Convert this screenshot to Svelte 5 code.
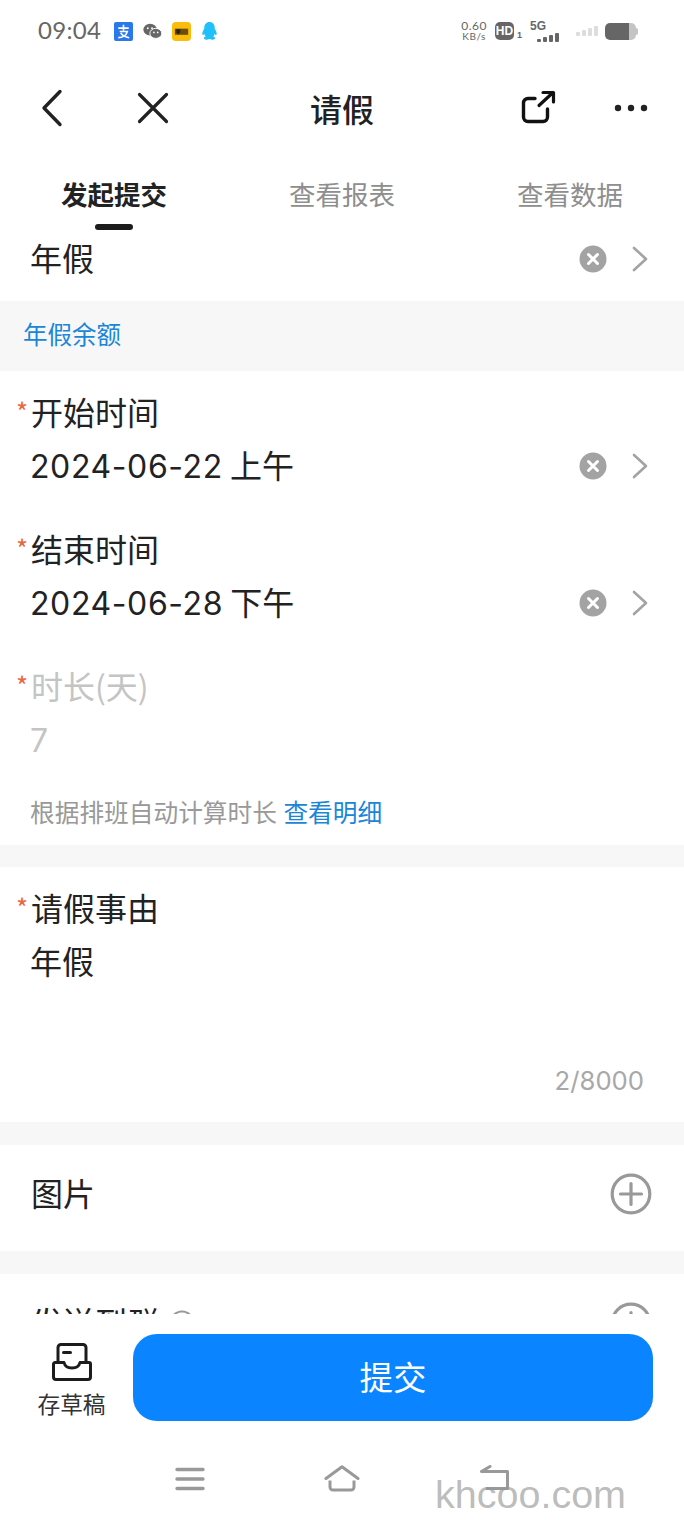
<script>
    const tabs = ['发起提交', '查看报表', '查看数据'];
    let active = 0;
</script>

{#snippet clearIcon()}
    <svg class="clear" width="28" height="28" viewBox="0 0 28 28">
        <circle cx="14" cy="14" r="13.5" fill="#a3a3a3" />
        <path d="M9.5 9.5l9 9M18.5 9.5l-9 9" fill="none" stroke="#fff" stroke-width="3" stroke-linecap="round" />
    </svg>
{/snippet}

{#snippet arrowIcon()}
    <svg class="arrow" width="16" height="26" viewBox="0 0 16 26">
        <path d="M2 2l12 11L2 24" fill="none" stroke="#a3a3a3" stroke-width="2.6" stroke-linecap="round" stroke-linejoin="round" />
    </svg>
{/snippet}

{#snippet plusIcon()}
    <svg width="42" height="42" viewBox="0 0 42 42">
        <circle cx="21" cy="21" r="18.8" fill="none" stroke="#999" stroke-width="3.2" />
        <path d="M21 10.5v21M10.5 21h21" fill="none" stroke="#999" stroke-width="3.2" stroke-linecap="round" />
    </svg>
{/snippet}

<div class="page">
    <div class="status">
        <span class="time">09:04</span>
        <div class="apps">
            <svg width="19" height="19" viewBox="0 0 20 20">
                <rect width="20" height="20" rx="2" fill="#2a78ea" />
                <path d="M4.5 6.5h11M10 3v6M6 10h8c-1 4-5 6.500-9.500 6.500M7 11.500c2 3 5.500 4.500 9 5" fill="none" stroke="#fff" stroke-width="1.700" />
            </svg>
            <svg width="19" height="17" viewBox="0 0 20 18">
                <ellipse cx="7.500" cy="7" rx="7.200" ry="6.200" fill="#666" />
                <ellipse cx="13.500" cy="11" rx="6.300" ry="5.300" fill="#666" stroke="#fff" stroke-width="1" />
                <circle cx="5" cy="5.500" r="1" fill="#fff" />
                <circle cx="9.500" cy="5.500" r="1" fill="#fff" />
                <circle cx="11.500" cy="10" r=".9" fill="#fff" />
                <circle cx="15.500" cy="10" r=".9" fill="#fff" />
            </svg>
            <svg width="19" height="19" viewBox="0 0 20 20">
                <rect width="20" height="20" rx="4" fill="#fbbd0c" />
                <rect x="3" y="7" width="14" height="6.500" fill="#6b4f0a" />
                <path d="M4 8.500h5M4 10.500h5M6.500 8v5" stroke="#111" stroke-width="1.100" />
            </svg>
            <svg width="17" height="19" viewBox="0 0 18 20">
                <path d="M9 0c3.500 0 5.500 2.700 5.500 6 0 1 .3 1.500 1 2.700 1 1.800 1.500 4.300.7 5-.5.400-1.200-.4-1.700-1.300-.2 1.200-.8 2.200-1.500 2.800 1 .4 2 1 2 2 0 1.300-2.500 1.800-4 1.300-.8-.3-1.300-.6-2-.6s-1.200.3-2 .6c-1.500.5-4 0-4-1.300 0-1 1-1.600 2-2-.7-.6-1.300-1.600-1.500-2.800-.5.900-1.200 1.700-1.700 1.300-.8-.7-.3-3.200.7-5 .7-1.200 1-1.700 1-2.700C3.500 2.700 5.500 0 9 0z" fill="#1fc0fb" />
            </svg>
        </div>
        <div class="indicators">
            <div class="speed"><span>0.60</span><span class="unit">KB/s</span></div>
            <div class="hd"><span class="hd-box">HD</span><span class="hd-num">1</span></div>
            <div class="net">
                <span class="five-g">5G</span>
                <div class="bars dark">
                    <i style="height:3px"></i><i style="height:5px"></i><i style="height:7px"></i><i style="height:9px"></i>
                </div>
            </div>
            <div class="bars light">
                <i style="height:4px"></i><i style="height:6px"></i><i style="height:8px"></i><i style="height:10px"></i>
            </div>
            <div class="battery"><div class="level"></div><div class="tip"></div></div>
        </div>
    </div>

    <div class="nav">
        <svg class="nav-back" width="24" height="38" viewBox="0 0 24 38">
            <path d="M20 2.500L4 19l16 16.500" fill="none" stroke="#222" stroke-width="3.400" stroke-linecap="round" stroke-linejoin="round" />
        </svg>
        <svg class="nav-close" width="32" height="32" viewBox="0 0 32 32">
            <path d="M2.500 2.500l27 27M29.500 2.500l-27 27" fill="none" stroke="#222" stroke-width="3.200" stroke-linecap="round" />
        </svg>
        <span class="nav-title">请假</span>
        <svg class="nav-share" width="36" height="36" viewBox="0 0 36 36">
            <path d="M14 8.500H7a4.500 4.500 0 0 0-4.500 4.500v14a4.500 4.500 0 0 0 4.500 4.500h15a4.500 4.500 0 0 0 4.500-4.500v-8" fill="none" stroke="#111" stroke-width="3.400" stroke-linecap="round" />
            <path d="M18 15.500L32 2.500M22 2.500h10.500V12" fill="none" stroke="#111" stroke-width="3.200" stroke-linecap="round" stroke-linejoin="round" />
        </svg>
        <svg class="nav-more" width="34" height="8" viewBox="0 0 34 8">
            <circle cx="4" cy="4" r="3.200" fill="#222" />
            <circle cx="17" cy="4" r="3.200" fill="#222" />
            <circle cx="30" cy="4" r="3.200" fill="#222" />
        </svg>
    </div>

    <div class="tabs">
        {#each tabs as tab, i}
            <div class="tab" class:active={i === active}>{tab}</div>
        {/each}
    </div>

    <div class="scroll">
        <div class="row first">
            <span class="value">年假</span>
            {@render clearIcon()}
            {@render arrowIcon()}
        </div>
        <div class="balance">年假余额</div>

        <div class="fields">
            <div class="field">
                <div class="label"><span class="req">*</span>开始时间</div>
                <div class="row">
                    <span class="value"><span class="num">2024-06-22</span> 上午</span>
                    {@render clearIcon()}
                    {@render arrowIcon()}
                </div>
            </div>
            <div class="field">
                <div class="label"><span class="req">*</span>结束时间</div>
                <div class="row">
                    <span class="value"><span class="num">2024-06-28</span> 下午</span>
                    {@render clearIcon()}
                    {@render arrowIcon()}
                </div>
            </div>
            <div class="field disabled">
                <div class="label"><span class="req">*</span>时长(天)</div>
                <div class="row"><span class="value"><span class="num">7</span></span></div>
            </div>
            <div class="note">根据排班自动计算时长 <span class="link">查看明细</span></div>
        </div>

        <div class="band"></div>

        <div class="reason">
            <div class="label"><span class="req">*</span>请假事由</div>
            <div class="row"><span class="value">年假</span></div>
            <div class="count">2/8000</div>
        </div>

        <div class="band wide"></div>

        <div class="attach">
            <span class="attach-name">图片</span>
            {@render plusIcon()}
        </div>

        <div class="band wide"></div>

        <div class="attach send">
            <span class="attach-name">发送到群</span>
            <svg class="help" width="26" height="26" viewBox="0 0 26 26">
                <circle cx="13" cy="13" r="11.500" fill="none" stroke="#999" stroke-width="2.200" />
            </svg>
            <span class="spacer"></span>
            {@render plusIcon()}
        </div>
    </div>

    <div class="footer">
        <div class="draft">
            <svg width="40" height="38" viewBox="0 0 40 38">
                <path d="M6 19V4.500A3 3 0 0 1 9 1.500h22a3 3 0 0 1 3 3V19" fill="none" stroke="#1c1c1c" stroke-width="3" />
                <path d="M1.500 21a1.500 1.500 0 0 1 1.500-1.500h9c1 4 3 5.500 8 5.500s7-1.500 8-5.500h9a1.500 1.500 0 0 1 1.500 1.500v13a2.500 2.500 0 0 1-2.500 2.500H4A2.500 2.500 0 0 1 1.500 34z" fill="none" stroke="#1c1c1c" stroke-width="3" stroke-linejoin="round" />
                <path d="M11.500 9.500h7" stroke="#1c1c1c" stroke-width="3" stroke-linecap="round" />
            </svg>
            <span>存草稿</span>
        </div>
        <div class="submit">提交</div>
    </div>

    <div class="sysnav">
        <svg class="sys-menu" width="30" height="24" viewBox="0 0 30 24">
            <path d="M2 2.500h26M2 12h26M2 21.500h26" fill="none" stroke="#999" stroke-width="3.400" stroke-linecap="round" />
        </svg>
        <svg width="36" height="27" viewBox="0 0 36 27">
            <path d="M2 13.500L18 1.800l16 11.700" fill="none" stroke="#999" stroke-width="3" stroke-linecap="round" stroke-linejoin="round" />
            <path d="M6 15.500v6.500a3 3 0 0 0 3 3h18a3 3 0 0 0 3-3v-6.500" fill="none" stroke="#999" stroke-width="3" />
        </svg>
        <svg width="32" height="27" viewBox="0 0 32 27">
            <path d="M11 1.500L2.500 6.500h26v17H8" fill="none" stroke="#999" stroke-width="3" stroke-linecap="round" stroke-linejoin="round" />
        </svg>
    </div>

    <div class="watermark">khcoo.com</div>
</div>

<style>
    :global(body) {
        background: #fff;
    }

    .page {
        position: relative;
        width: 684px;
        height: 1520px;
        overflow: hidden;
        display: flex;
        flex-direction: column;
        background: #fff;
        color: #222;
        font-family: "Noto Sans CJK SC", "Noto Sans", sans-serif;
    }

    .status {
        height: 62px;
        flex: none;
        display: flex;
        align-items: center;
        padding: 0 46px 0 38px;
        box-sizing: border-box;
    }

    .time {
        font-family: Lato, sans-serif;
        font-size: 24px;
        line-height: 28px;
        margin-top: -2px;
        color: #666;
        letter-spacing: .3px;
    }

    .apps {
        display: flex;
        align-items: center;
        gap: 10px;
        margin-left: 13px;
    }

    .indicators {
        margin-left: auto;
        display: flex;
        align-items: center;
        color: #666;
    }

    .speed {
        display: flex;
        flex-direction: column;
        align-items: center;
        font-family: Lato, sans-serif;
        font-size: 12px;
        line-height: 10px;
        letter-spacing: .5px;
    }

    .speed .unit {
        font-size: 10px;
    }

    .hd {
        display: flex;
        align-items: flex-end;
        margin-left: 8px;
    }

    .hd-box {
        width: 19px;
        height: 18px;
        border-radius: 5px;
        background: #666;
        color: #fff;
        font: 700 12px/18px "Liberation Sans", sans-serif;
        text-align: center;
    }

    .hd-num {
        font: 700 9px/9px "Liberation Sans", sans-serif;
        margin-left: 3px;
    }

    .net {
        display: flex;
        flex-direction: column;
        margin-left: 8px;
        width: 29px;
    }

    .five-g {
        font: 700 12px/10px "Liberation Sans", sans-serif;
    }

    .bars {
        display: flex;
        align-items: flex-end;
        gap: 2px;
    }

    .bars i {
        display: block;
        width: 4px;
        border-radius: 1px;
        background: #666;
    }

    .bars.dark {
        justify-content: flex-end;
        height: 11px;
    }

    .bars.light {
        margin-left: 17px;
    }

    .bars.light i {
        background: #ddd;
    }

    .battery {
        display: flex;
        align-items: center;
        margin-left: 7px;
    }

    .level {
        width: 31px;
        height: 17px;
        border-radius: 5px;
        background: linear-gradient(90deg, #666 0 78%, #c4c4c4 78%);
    }

    .tip {
        width: 2px;
        height: 7px;
        border-radius: 0 2px 2px 0;
        background: #c4c4c4;
    }

    .nav {
        height: 92px;
        flex: none;
        display: flex;
        align-items: center;
    }

    .nav-back {
        margin-left: 40px;
    }

    .nav-close {
        margin-left: 73px;
    }

    .nav-title {
        margin-left: 141px;
        font-size: 32px;
        font-weight: 500;
        line-height: 40px;
    }

    .nav-share {
        margin-left: 147px;
        margin-top: -1px;
    }

    .nav-more {
        margin-left: 57px;
    }

    .tabs {
        height: 78px;
        flex: none;
        display: grid;
        grid-template-columns: repeat(3, 228px);
    }

    .tab {
        position: relative;
        text-align: center;
        font-size: 26.5px;
        line-height: 36px;
        padding-top: 22px;
        color: #8e8e8e;
    }

    .tab.active {
        color: #222;
        font-weight: 700;
    }

    .tab.active::after {
        content: "";
        position: absolute;
        left: 95px;
        bottom: 2px;
        width: 38px;
        height: 6px;
        border-radius: 3px;
        background: #1c1c1c;
    }

    .scroll {
        height: 1082px;
        flex: none;
        overflow: hidden;
    }

    .row {
        display: flex;
        align-items: center;
        height: 44px;
        padding: 0 36px 0 30px;
    }

    .row.first {
        height: 69px;
        padding-bottom: 16px;
        box-sizing: border-box;
    }

    .value {
        flex: 1;
        height: 44px;
        font-size: 32px;
        line-height: 40px;
        color: #222;
    }

    .num {
        font-family: Inter, "Noto Sans", sans-serif;
        font-size: 32px;
        letter-spacing: .6px;
    }

    .clear {
        margin-right: 25px;
    }

    .balance {
        height: 70px;
        background: #f7f7f7;
        padding-left: 23px;
        font-size: 24.500px;
        line-height: 66px;
        color: #1a86d8;
    }

    .fields {
        padding-top: 20px;
    }

    .field {
        height: 137px;
    }

    .label {
        position: relative;
        padding-left: 31px;
        height: 44px;
        font-size: 32px;
        line-height: 40px;
        margin-bottom: 9px;
    }

    .req {
        position: absolute;
        left: 16px;
        top: 0;
        font-size: 26px;
        line-height: 40px;
        color: #e8673c;
    }

    .disabled .label,
    .disabled .value {
        color: #c4c4c4;
    }

    .note {
        margin-top: -9px;
        padding-left: 30px;
        height: 52px;
        font-size: 24.700px;
        line-height: 36px;
        color: #999;
    }

    .link {
        color: #1a86d8;
        margin-left: 1px;
    }

    .band {
        height: 22px;
        background: #f7f7f7;
    }

    .band.wide {
        height: 23px;
    }

    .reason {
        height: 255px;
        padding-top: 20px;
        box-sizing: border-box;
    }

    .count {
        margin-top: 78px;
        padding-right: 40px;
        text-align: right;
        font-family: Inter, sans-serif;
        font-size: 25.700px;
        line-height: 38px;
        color: #a8a8a8;
    }

    .attach {
        height: 106px;
        display: flex;
        align-items: center;
        justify-content: space-between;
        padding: 0 32px 8px 31px;
        box-sizing: border-box;
    }

    .attach-name {
        font-size: 32px;
        line-height: 40px;
        margin-bottom: 5px;
    }

    .send {
        justify-content: flex-start;
    }

    .help {
        margin-left: 10px;
    }

    .spacer {
        flex: 1;
    }

    .footer {
        height: 120px;
        flex: none;
        display: flex;
        align-items: flex-start;
        padding-top: 20px;
        box-sizing: border-box;
        background: #fff;
    }

    .draft {
        width: 133px;
        flex: none;
        display: flex;
        flex-direction: column;
        align-items: center;
        padding-left: 10px;
        box-sizing: border-box;
        padding-top: 9px;
    }

    .draft span {
        font-size: 22.700px;
        line-height: 32px;
        color: #333;
        margin-top: 7px;
    }

    .submit {
        width: 520px;
        height: 87px;
        border-radius: 24px;
        background: #0a84ff;
        color: #fff;
        text-align: center;
        font-size: 33.500px;
        line-height: 83px;
    }

    .sysnav {
        flex: 1;
        display: flex;
        gap: 119px;
        align-items: flex-start;
        padding: 31px 0 0 175px;
    }

    .sys-menu {
        margin-top: 2px;
    }

    .watermark {
        position: absolute;
        left: 435px;
        top: 1468px;
        font-family: "Liberation Sans", sans-serif;
        font-size: 39.500px;
        line-height: 52px;
        color: rgba(150, 150, 150, .65);
    }
</style>
